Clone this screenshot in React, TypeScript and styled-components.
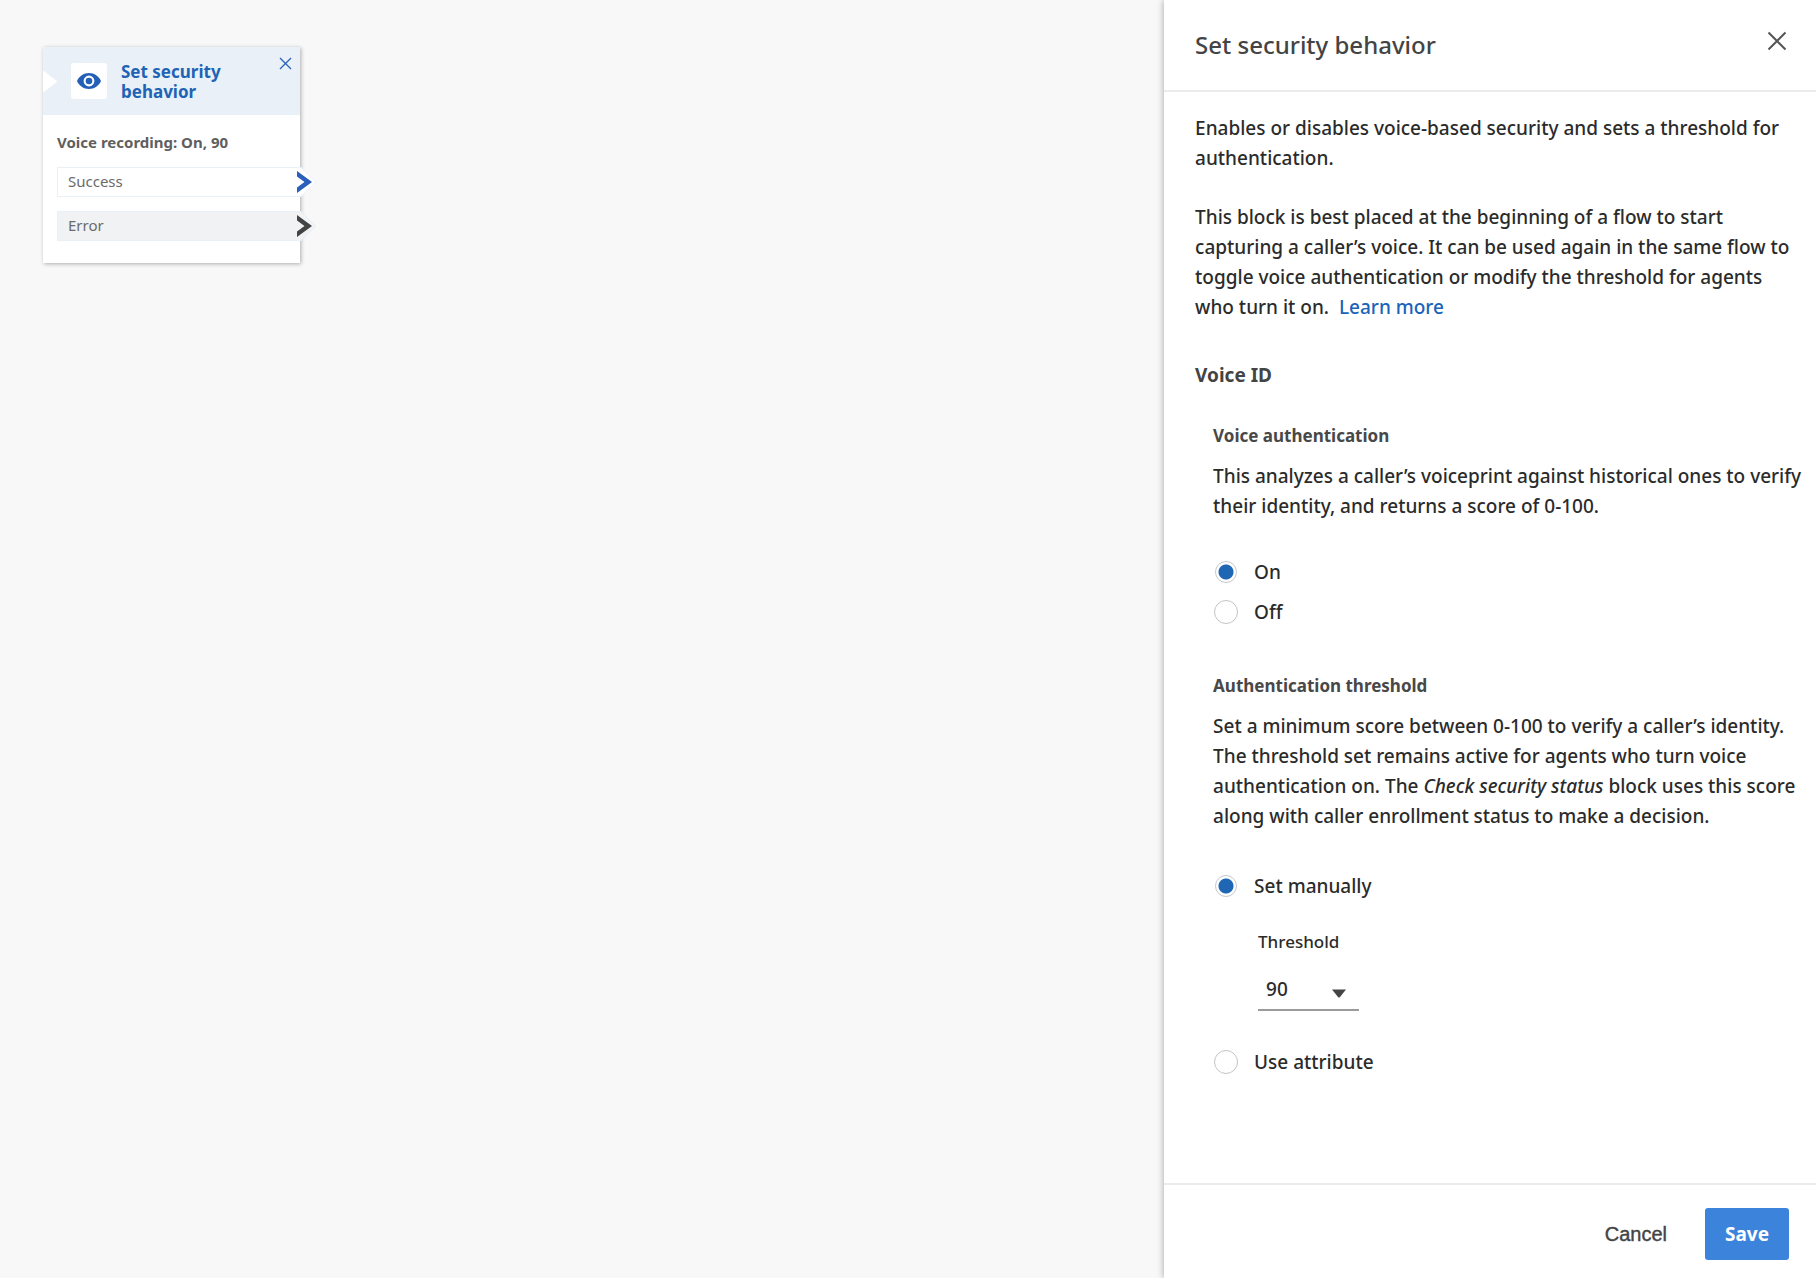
import React, { useState } from "react";
import styled, { createGlobalStyle } from "styled-components";

const sans = `"Noto Sans", "Open Sans", sans-serif`;

const GlobalStyle = createGlobalStyle`
  *, *::before, *::after { box-sizing: border-box; }
  body {
    margin: 0;
    background: #f8f8f8;
    color: #2b2b2b;
    font-family: ${sans};
    font-size: 19px;
    font-weight: 500;
    line-height: 30px;
  }
  h1, h2, h3, p, fieldset { margin: 0; padding: 0; border: 0; min-width: 0; }
  button, select, input { font: inherit; color: inherit; margin: 0; }
  button { padding: 0; border: 0; background: none; cursor: pointer; }
`;

const Page = styled.div`
  display: flex;
  min-height: 100vh;
`;

const Canvas = styled.main`
  position: relative;
  flex: 1;
  min-width: 340px;
`;

/* ---- flow block on the canvas ---- */

const Block = styled.article`
  position: absolute;
  left: 43px;
  top: 47px;
  width: 257px;
  padding-bottom: 22px;
  background: #fff;
  box-shadow: 1px 1px 4px rgba(0, 0, 0, 0.3);
`;

const BlockHeader = styled.header`
  position: relative;
  display: flex;
  align-items: center;
  gap: 14px;
  height: 68px;
  padding: 0 28px;
  background: #e9f0f8;
`;

const InputNotch = styled.svg`
  position: absolute;
  left: 0;
  top: 23px;
`;

const BlockIcon = styled.span`
  display: flex;
  align-items: center;
  justify-content: center;
  flex: none;
  width: 36px;
  height: 36px;
  border-radius: 3px;
  background: #fff;
`;

const BlockTitle = styled.h2`
  padding-top: 2px;
  color: #1f63b5;
  font-size: 17px;
  font-weight: 700;
  line-height: 20px;
`;

const BlockClose = styled.button`
  position: absolute;
  top: 10px;
  right: 8px;
  display: flex;
  color: #2a62bd;
`;

const BlockBody = styled.div`
  display: flex;
  flex-direction: column;
  gap: 14px;
  padding: 18px 0 0 14px;
`;

const BlockSummary = styled.p`
  padding-bottom: 2px;
  color: #5f5f5f;
  font-size: 15px;
  font-weight: 700;
  line-height: 18px;
`;

const Outcome = styled.div<{ $muted?: boolean }>`
  position: relative;
  height: 30px;
  padding-left: 10px;
  border: 1px solid #e9f0f8;
  border-right: 0;
  background: ${(p) => (p.$muted ? "#f0f2f4" : "#fff")};
  color: #6b6b6b;
  font-size: 15px;
  font-weight: 400;
  line-height: 26px;
`;

const OutcomeArrow = styled.svg`
  position: absolute;
  right: -17px;
  top: -1px;
`;

/* ---- settings panel ---- */

const Panel = styled.aside`
  position: relative;
  display: flex;
  flex-direction: column;
  flex: 0 0 35.9%;
  background: #fff;
  box-shadow: 0 0 7px rgba(0, 0, 0, 0.35);
`;

const PanelHeader = styled.header`
  display: flex;
  align-items: center;
  justify-content: space-between;
  height: 92px;
  padding: 0 29px 0 31px;
  border-bottom: 2px solid #ebebeb;
`;

const PanelTitle = styled.h1`
  color: #444;
  font-size: 24px;
  font-weight: 500;
  line-height: 32px;
`;

const PanelClose = styled.button`
  display: flex;
  padding-bottom: 8px;
  color: #555;
`;

const PanelBody = styled.div`
  flex: 1;
  padding: 21px 8px 40px 31px;
`;

const Intro = styled.div`
  display: flex;
  flex-direction: column;
  gap: 29px;
  padding-right: 16px;
`;

const LearnMore = styled.a`
  margin-left: 5px;
  color: #1b62b8;
  text-decoration: none;
`;

const SectionTitle = styled.h2`
  margin-top: 38px;
  color: #444;
  font-size: 19px;
  font-weight: 700;
  line-height: 30px;
`;

const Setting = styled.section<{ $top: number }>`
  margin-top: ${(p) => p.$top}px;
  padding-left: 18px;
`;

const SettingTitle = styled.h3`
  margin-bottom: 10px;
  color: #484848;
  font-size: 17px;
  font-weight: 700;
  line-height: 30px;
`;

const Choices = styled.fieldset<{ $top: number; $gap: number }>`
  display: flex;
  flex-direction: column;
  align-items: flex-start;
  gap: ${(p) => p.$gap}px;
  margin-top: ${(p) => p.$top}px;
  padding-left: 1px;
`;

const Choice = styled.label`
  display: flex;
  align-items: center;
  gap: 16px;
  cursor: pointer;
`;

const Radio = styled.input.attrs({ type: "radio" })`
  appearance: none;
  flex: none;
  width: 24px;
  height: 24px;
  border: 1px solid #c4c4c4;
  border-radius: 50%;
  background: #fff;

  &:checked {
    width: 22px;
    height: 22px;
    margin: 1px;
    border-color: #c4c9cf;
    background: radial-gradient(circle, #1f66b5 7px, #fff 8px);
  }
`;

const ThresholdField = styled.div`
  display: flex;
  flex-direction: column;
  gap: 11px;
  padding: 0 0 10px 44px;
`;

const ThresholdLabel = styled.label`
  font-size: 17px;
`;

const SelectBox = styled.span`
  position: relative;
  width: 101px;
`;

const Select = styled.select`
  appearance: none;
  width: 100%;
  height: 43px;
  padding: 0 32px 0 8px;
  border: 0;
  border-bottom: 2px solid #9b9b9b;
  border-radius: 0;
  background: transparent;
`;

const SelectArrow = styled.svg`
  position: absolute;
  right: 13px;
  top: 21px;
  pointer-events: none;
`;

const PanelFooter = styled.footer`
  display: flex;
  align-items: center;
  justify-content: flex-end;
  gap: 38px;
  height: 95px;
  padding: 4px 27px 0 31px;
  border-top: 2px solid #ebebeb;
`;

const CancelButton = styled.button`
  color: #444;
  font-family: "Liberation Sans", Arial, sans-serif;
  font-size: 20px;
  -webkit-text-stroke: 0.4px currentColor;
`;

const SaveButton = styled.button`
  height: 52px;
  padding: 0 20px;
  border-radius: 3px;
  background: #3c83dc;
  color: #fff;
  font-weight: 700;
`;

function CrossIcon({ size, stroke }: { size: number; stroke: number }) {
  return (
    <svg width={size} height={size} viewBox="0 0 20 20" fill="none" stroke="currentColor" strokeWidth={stroke} aria-hidden="true">
      <path d="M1.5 1.5 18.5 18.5M18.5 1.5 1.5 18.5" />
    </svg>
  );
}

function EyeIcon() {
  return (
    <svg width="24" height="16" viewBox="0 0 24 16" aria-hidden="true">
      <path
        fill="#2460b8"
        fillRule="evenodd"
        d="M12 0C6.6 0 2 3.3 0 8c2 4.700 6.600 8 12 8s10-3.300 12-8C22 3.300 17.400 0 12 0Zm0 13.400A5.400 5.400 0 1 1 12 2.600a5.400 5.400 0 0 1 0 10.800Z"
      />
      <circle cx="12" cy="8" r="3.300" fill="#2460b8" />
    </svg>
  );
}

function OutcomeRow({ label, color, muted }: { label: string; color: string; muted?: boolean }) {
  return (
    <Outcome $muted={muted}>
      {label}
      <OutcomeArrow width="20" height="30" viewBox="0 0 20 30" aria-hidden="true">
        <path d="M0 0.500H4L19 15 4 29.500H0Z" fill={muted ? "#f0f2f4" : "#fff"} />
        <path d="M0 0.500H4L19 15 4 29.500H0" fill="none" stroke="#e9f0f8" />
        <path d="M0 4 15 15 0 26V20.500L7.500 15 0 9.500Z" fill={color} />
      </OutcomeArrow>
    </Outcome>
  );
}

export default function App() {
  const [auth, setAuth] = useState("on");
  const [mode, setMode] = useState("manual");
  const [threshold, setThreshold] = useState("90");

  return (
    <>
      <GlobalStyle />
      <Page>
        <Canvas>
          <Block>
            <BlockHeader>
              <InputNotch width="15" height="23" viewBox="0 0 15 23" aria-hidden="true">
                <path d="M0 0.500 14.500 11.500 0 22.500Z" fill="#fff" />
              </InputNotch>
              <BlockIcon>
                <EyeIcon />
              </BlockIcon>
              <BlockTitle>
                Set security
                <br />
                behavior
              </BlockTitle>
              <BlockClose aria-label="Remove block">
                <CrossIcon size={13} stroke={2} />
              </BlockClose>
            </BlockHeader>
            <BlockBody>
              <BlockSummary>Voice recording: On, {threshold}</BlockSummary>
              <OutcomeRow label="Success" color="#2a5fbb" />
              <OutcomeRow label="Error" color="#444" muted />
            </BlockBody>
          </Block>
        </Canvas>

        <Panel>
          <PanelHeader>
            <PanelTitle>Set security behavior</PanelTitle>
            <PanelClose aria-label="Close">
              <CrossIcon size={20} stroke={2} />
            </PanelClose>
          </PanelHeader>

          <PanelBody>
            <Intro>
              <p>Enables or disables voice-based security and sets a threshold for authentication.</p>
              <p>
                This block is best placed at the beginning of a flow to start capturing a caller’s voice. It can be
                used again in the same flow to toggle voice authentication or modify the threshold for agents who turn
                it on. <LearnMore href="#">Learn more</LearnMore>
              </p>
            </Intro>

            <SectionTitle>Voice ID</SectionTitle>

            <Setting $top={31}>
              <SettingTitle id="auth-title">Voice authentication</SettingTitle>
              <p>
                This analyzes a caller’s voiceprint against historical ones to verify their identity, and returns a
                score of 0-100.
              </p>
              <Choices $top={36} $gap={10} aria-labelledby="auth-title">
                <Choice>
                  <Radio name="auth" checked={auth === "on"} onChange={() => setAuth("on")} />
                  On
                </Choice>
                <Choice>
                  <Radio name="auth" checked={auth === "off"} onChange={() => setAuth("off")} />
                  Off
                </Choice>
              </Choices>
            </Setting>

            <Setting $top={44}>
              <SettingTitle id="threshold-title">Authentication threshold</SettingTitle>
              <p>
                Set a minimum score between 0-100 to verify a caller’s identity. The threshold set remains active for
                agents who turn voice authentication on. The <em>Check security status</em> block uses this score along
                with caller enrollment status to make a decision.
              </p>
              <Choices $top={40} $gap={26} aria-labelledby="threshold-title">
                <Choice>
                  <Radio name="mode" checked={mode === "manual"} onChange={() => setMode("manual")} />
                  Set manually
                </Choice>
                <ThresholdField>
                  <ThresholdLabel htmlFor="threshold">Threshold</ThresholdLabel>
                  <SelectBox>
                    <Select id="threshold" value={threshold} onChange={(e) => setThreshold(e.target.value)}>
                      {["50", "60", "70", "80", "90", "100"].map((v) => (
                        <option key={v}>{v}</option>
                      ))}
                    </Select>
                    <SelectArrow width="14" height="9" viewBox="0 0 14 9" aria-hidden="true">
                      <path d="M0 0.500H14L8 8Q7 9 6 8Z" fill="#444" />
                    </SelectArrow>
                  </SelectBox>
                </ThresholdField>
                <Choice>
                  <Radio name="mode" checked={mode === "attribute"} onChange={() => setMode("attribute")} />
                  Use attribute
                </Choice>
              </Choices>
            </Setting>
          </PanelBody>

          <PanelFooter>
            <CancelButton>Cancel</CancelButton>
            <SaveButton>Save</SaveButton>
          </PanelFooter>
        </Panel>
      </Page>
    </>
  );
}
